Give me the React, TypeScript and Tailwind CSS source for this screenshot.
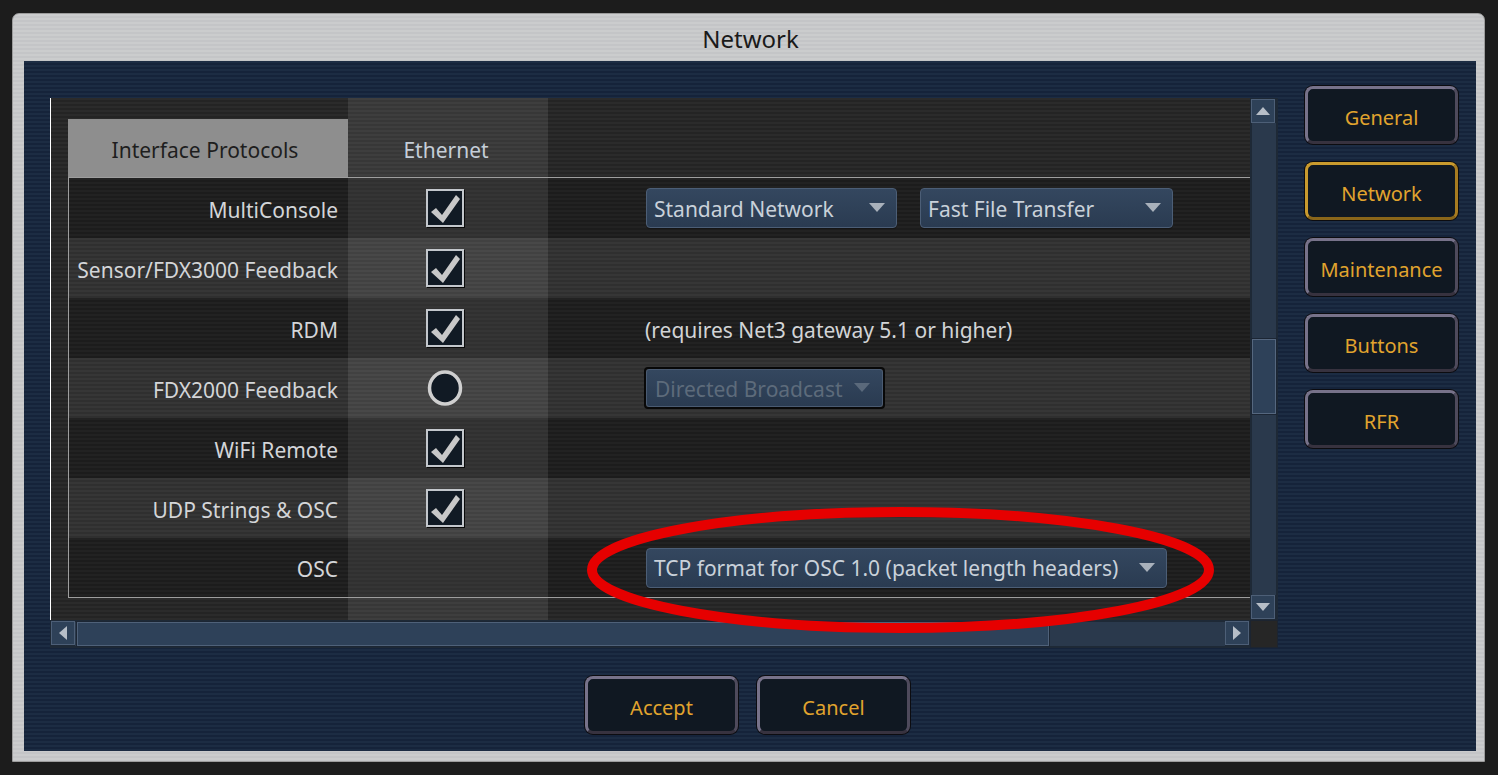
import React from "react";

const FONT = "font-['Noto_Sans','DejaVu_Sans',sans-serif]";

const blueStripes =
  "bg-[repeating-linear-gradient(to_bottom,#1c2c43_0px,#1c2c43_2px,#15233a_2px,#15233a_4px)]";
const darkStripes =
  "bg-[repeating-linear-gradient(to_bottom,#2b2b2b_0px,#2b2b2b_2px,#242424_2px,#242424_4px)]";
const greyStripes =
  "bg-[repeating-linear-gradient(to_bottom,#cbcccd_0px,#cbcccd_2px,#c4c5c7_2px,#c4c5c7_4px)]";

function Check() {
  return (
    <div className="w-[38px] h-[38px] border-2 border-[#c3c7cc] bg-[#111a24] shadow-[1px_1px_0_#0a0a0a]">
      <svg width="34" height="34" viewBox="0 0 34 34">
        <polygon points="3,21 8,17 14,24 28,4 32,8 15,32" fill="#c8c8c8" />
      </svg>
    </div>
  );
}

function Radio() {
  return (
    <svg width="36" height="36" viewBox="0 0 36 36">
      <ellipse cx="18" cy="18" rx="15.5" ry="16" fill="#111a24" stroke="#cfcfcf" strokeWidth="3.5" />
    </svg>
  );
}

function Caret({ color }: { color: string }) {
  return (
    <svg width="16" height="10" viewBox="0 0 16 10">
      <polygon points="0,0 16,0 8,9" fill={color} />
    </svg>
  );
}

function Dropdown({
  text,
  w,
  disabled,
}: {
  text: string;
  w: string;
  disabled?: boolean;
}) {
  if (disabled) {
    return (
      <div className={`${w} h-[42px] rounded-[4px] border-2 border-[#080808] flex`}>
        <div className="flex-1 rounded-[3px] border border-[#4a5b72] bg-[linear-gradient(to_bottom,#34475f,#2a3b51)] flex items-center justify-between pl-[8px] pr-[12px]">
          <span className="text-[21px] leading-none pt-[2px] text-[#5d6b7b] whitespace-nowrap">{text}</span>
          <Caret color="#5a697b" />
        </div>
      </div>
    );
  }
  return (
    <div
      className={`${w} h-[40px] rounded-[4px] border border-[#4c5e76] bg-[linear-gradient(to_bottom,#34475f,#2a3b51)] flex items-center justify-between pl-[7px] pr-[11px] shadow-[0_1px_0_#151515]`}
    >
      <span className="text-[21px] leading-none pt-[2px] text-[#c9d1da] whitespace-nowrap">{text}</span>
      <Caret color="#a9b1bb" />
    </div>
  );
}

type Row = {
  label: string;
  ctl: "check" | "radio" | "none";
  rest?: React.ReactNode;
  h?: string;
};

const rows: Row[] = [
  {
    label: "MultiConsole",
    ctl: "check",
    rest: (
      <div className="flex gap-[23px]">
        <Dropdown text="Standard Network" w="w-[251px]" />
        <Dropdown text="Fast File Transfer" w="w-[253px]" />
      </div>
    ),
  },
  { label: "Sensor/FDX3000 Feedback", ctl: "check" },
  {
    label: "RDM",
    ctl: "check",
    rest: (
      <span className="text-[21px] leading-none pt-[4px] text-[#d2d4d6] -ml-[1px]">
        (requires Net3 gateway 5.1 or higher)
      </span>
    ),
  },
  {
    label: "FDX2000 Feedback",
    ctl: "radio",
    rest: (
      <div className="-ml-[2px]">
        <Dropdown text="Directed Broadcast" w="w-[241px]" disabled />
      </div>
    ),
  },
  { label: "WiFi Remote", ctl: "check" },
  { label: "UDP Strings & OSC", ctl: "check" },
  {
    label: "OSC",
    ctl: "none",
    h: "h-[59px]",
    rest: <Dropdown text="TCP format for OSC 1.0 (packet length headers)" w="w-[521px]" />,
  },
];

function SideButton({ label, active }: { label: string; active?: boolean }) {
  return (
    <div
      className={
        active
          ? "w-[153px] h-[58px] rounded-[8px] border-[3px] border-[#c99a2e] border-b-[#8a661a] border-r-[#a87c20] bg-[#101822] flex items-center justify-center shadow-[0_0_0_1px_#0c0c10]"
          : "w-[153px] h-[58px] rounded-[8px] border-[3px] border-[#77728a] border-b-[#37323f] border-r-[#4e4a5c] bg-[#101822] flex items-center justify-center shadow-[0_0_0_1px_#0c0c10]"
      }
    >
      <span className="text-[20px] leading-none pt-[5px] text-[#e1a42e]">{label}</span>
    </div>
  );
}

function ArrowBtn({ dir }: { dir: "up" | "down" | "left" | "right" }) {
  const pts =
    dir === "up"
      ? "1,10 8,2 15,10"
      : dir === "down"
      ? "1,2 15,2 8,10"
      : dir === "left"
      ? "10,1 10,15 2,8"
      : "2,1 2,15 10,8";
  const box = dir === "up" || dir === "down" ? "16 12" : "12 16";
  const [bw, bh] = box.split(" ");
  return (
    <div className="w-[24px] h-[24px] bg-[#2e4158] border border-[#4d5f77] flex items-center justify-center">
      <svg width={bw} height={bh} viewBox={`0 0 ${box}`}>
        <polygon points={pts} fill="#b7bec7" />
      </svg>
    </div>
  );
}

export default function App() {
  return (
    <div className={`relative w-[1498px] h-[775px] bg-[#1c1c1c] pt-[13px] pl-[12px] ${FONT} overflow-hidden`}>
      <div className={`w-[1473px] h-[749px] rounded-t-[7px] border border-[#9c9c9c] ${greyStripes} flex flex-col`}>
        <div className="h-[47px] flex items-center justify-center">
          <span className="text-[24px] text-[#1a1a1a] leading-none pt-[3px] pl-[4px]">Network</span>
        </div>
        <div className={`ml-[11px] mr-[8px] h-[690px] ${blueStripes} flex flex-col`}>
          <div className="flex items-start">
            {/* table region */}
            <div className="ml-[26px] mt-[37px] w-[1228px] h-[550px] flex flex-col">
              <div className="flex h-[522px]">
                <div className={`w-[1200px] h-[522px] border-l border-white ${darkStripes} pl-[17px] flex flex-col`}>
                  <div className="h-[21px] flex">
                    <div className="w-[280px]" />
                    <div className="w-[200px] bg-white/[0.09]" />
                  </div>
                  <div className="h-[58px] flex">
                    <div className="w-[280px] bg-[#8e8e8e] flex items-center justify-center">
                      <span className="text-[21px] leading-none pt-[4px] text-[#1e1e1e] pr-[6px]">Interface Protocols</span>
                    </div>
                    <div className="w-[200px] bg-white/[0.09] flex items-center justify-center">
                      <span className="text-[21px] leading-none pt-[4px] text-[#c5ced8] -ml-[4px]">Ethernet</span>
                    </div>
                    <div className="flex-1" />
                  </div>
                  <div className="border-t border-l border-b border-[#9e9e9e]">
                    {rows.map((r, i) => (
                      <div
                        key={r.label}
                        className={`${r.h ?? "h-[60px]"} flex ${
                          i % 2 === 0 ? "bg-black/20" : "bg-white/[0.05]"
                        }`}
                      >
                        <div className="w-[279px] flex items-center justify-end pr-[10px]">
                          <span className="text-[21px] leading-none pt-[4px] text-[#d3d5d8] whitespace-nowrap">{r.label}</span>
                        </div>
                        <div className="w-[200px] bg-white/[0.09] flex items-center justify-center pr-[6px]">
                          {r.ctl === "check" && <Check />}
                          {r.ctl === "radio" && <Radio />}
                        </div>
                        <div className="flex-1 flex items-center pl-[98px]">{r.rest}</div>
                      </div>
                    ))}
                  </div>
                  <div className="flex-1 flex">
                    <div className="w-[280px]" />
                    <div className="w-[200px] bg-white/[0.09]" />
                  </div>
                </div>
                {/* vertical scrollbar */}
                <div className="w-[28px] h-[522px] bg-[#1e2936] p-[1px] flex flex-col">
                  <ArrowBtn dir="up" />
                  <div className="flex-1 bg-[#2a394c] flex flex-col border-x border-[#1e2936]">
                    <div className="h-[216px]" />
                    <div className="h-[75px] border border-[#55677f] bg-[#2e4159] shadow-[0_0_0_1px_#1c2634]" />
                    <div className="flex-1" />
                  </div>
                  <ArrowBtn dir="down" />
                </div>
              </div>
              {/* horizontal scrollbar */}
              <div className="flex h-[28px]">
                <div className="w-[1200px] h-[28px] bg-[#1e2936] p-[1px] flex">
                  <ArrowBtn dir="left" />
                  <div className="flex-1 bg-[#2a394c] flex border-y border-[#1e2936]">
                    <div className="w-[2px]" />
                    <div className="w-[972px] border border-[#4f6179] bg-[#2e4159] shadow-[0_0_0_1px_#1c2634]" />
                    <div className="flex-1" />
                  </div>
                  <ArrowBtn dir="right" />
                </div>
                <div className="w-[28px] h-[28px] bg-[#262626] border border-[#1c2430]" />
              </div>
            </div>
            {/* right tabs */}
            <div className="ml-[27px] mt-[25px] flex flex-col gap-[18px]">
              <SideButton label="General" />
              <SideButton label="Network" active />
              <SideButton label="Maintenance" />
              <SideButton label="Buttons" />
              <SideButton label="RFR" />
            </div>
          </div>
          <div className="mt-[28px] flex justify-center gap-[19px] pr-[5px]">
            <SideButton label="Accept" />
            <SideButton label="Cancel" />
          </div>
        </div>
      </div>
      {/* red annotation ellipse */}
      <svg
        className="absolute left-[587px] top-[507px] pointer-events-none"
        width="628"
        height="128"
        viewBox="0 0 628 128"
      >
        <ellipse cx="313.5" cy="63" rx="308.5" ry="58" fill="none" stroke="#e60000" strokeWidth="10" />
      </svg>
    </div>
  );
}
